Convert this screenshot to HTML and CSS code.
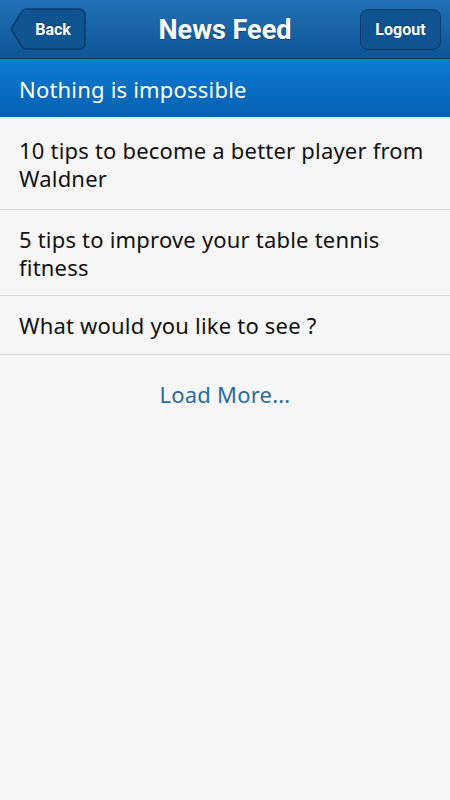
FILE: index.html
```html
<!DOCTYPE html>
<html lang="en">

<head>
    <meta charset="UTF-8">
    <meta name="viewport" content="width=device-width, initial-scale=1.0">
    <title>News Feed</title>
    <link rel="stylesheet" href="styles.css">
</head>

<body>
    <div class="header">
        <a class="back-button" href="#">
            <svg class="back-shape" width="76" height="42" viewBox="0 0 76 42">
                <path d="M16 1 H69 Q75 1 75 7 V35 Q75 41 69 41 H16 Q14 41 12.5 39.5 L2 23 Q1 21 2 19 L12.5 2.5 Q14 1 16 1 Z"
                    fill="#0f5390" stroke="#0a3b6b" stroke-width="1.5" />
            </svg>
            <span>Back</span>
        </a>
        <h1>News Feed</h1>
        <a class="logout-button" href="#">Logout</a>
    </div>

    <div class="section-title">Nothing is impossible</div>

    <ul class="news-list">
        <li>10 tips to become a better player from Waldner</li>
        <li>5 tips to improve your table tennis fitness</li>
        <li>What would you like to see ?</li>
    </ul>

    <div class="load-more">Load More...</div>
</body>

</html>
```

FILE: styles.css
```css
body {
    font-family: "Noto Sans", "Open Sans", sans-serif;
    background-color: #f6f6f6;
    margin: 0;
    padding: 0;
}

.header {
    display: flex;
    align-items: center;
    justify-content: space-between;
    height: 58px;
    padding: 0 9px 0 10px;
    background: linear-gradient(#2171b6, #0c5596);
    border-bottom: 1px solid #083f70;
    font-family: Roboto, sans-serif;
}

.header h1 {
    margin: 2px 0 0 4px;
    color: #fff;
    font-size: 27px;
    font-weight: bold;
    text-shadow: 0 1px 1px rgba(0, 0, 0, 0.3);
}

.back-button,
.logout-button {
    color: #fff;
    text-decoration: none;
    font-size: 16px;
    font-weight: bold;
    text-shadow: 0 -1px 0 rgba(0, 0, 0, 0.3);
}

.back-button {
    position: relative;
    display: flex;
    align-items: center;
    justify-content: center;
    width: 76px;
    height: 42px;
    box-sizing: border-box;
    padding-left: 10px;
}

.back-shape {
    position: absolute;
    left: 0;
    top: 0;
}

.back-button span {
    position: relative;
}

.logout-button {
    display: flex;
    align-items: center;
    justify-content: center;
    width: 81px;
    height: 41px;
    box-sizing: border-box;
    background-color: #0f5390;
    border: 1px solid #0a3b6b;
    border-radius: 8px;
}

.section-title {
    height: 60px;
    display: flex;
    align-items: center;
    padding: 1px 19px 0;
    box-sizing: border-box;
    color: #fff;
    font-size: 22px;
    letter-spacing: 0.2px;
    background: linear-gradient(#0b7bd2, #0560b2);
    border-bottom: 2px solid #e4f0f4;
}

.news-list {
    list-style: none;
    margin: 0;
    padding: 0;
}

.news-list li {
    padding: 15px 19px 14px;
    font-size: 22px;
    letter-spacing: 0.2px;
    line-height: 28px;
    color: #111;
    border-bottom: 1px solid #d8d8d8;
}

.news-list li:first-child {
    padding-top: 17px;
    padding-bottom: 17px;
}

.news-list li:last-child {
    padding-bottom: 15px;
}

.load-more {
    text-align: center;
    margin-top: 25px;
    font-size: 22px;
    letter-spacing: 0.2px;
    line-height: 28px;
    color: #2a6b9f;
}
```
